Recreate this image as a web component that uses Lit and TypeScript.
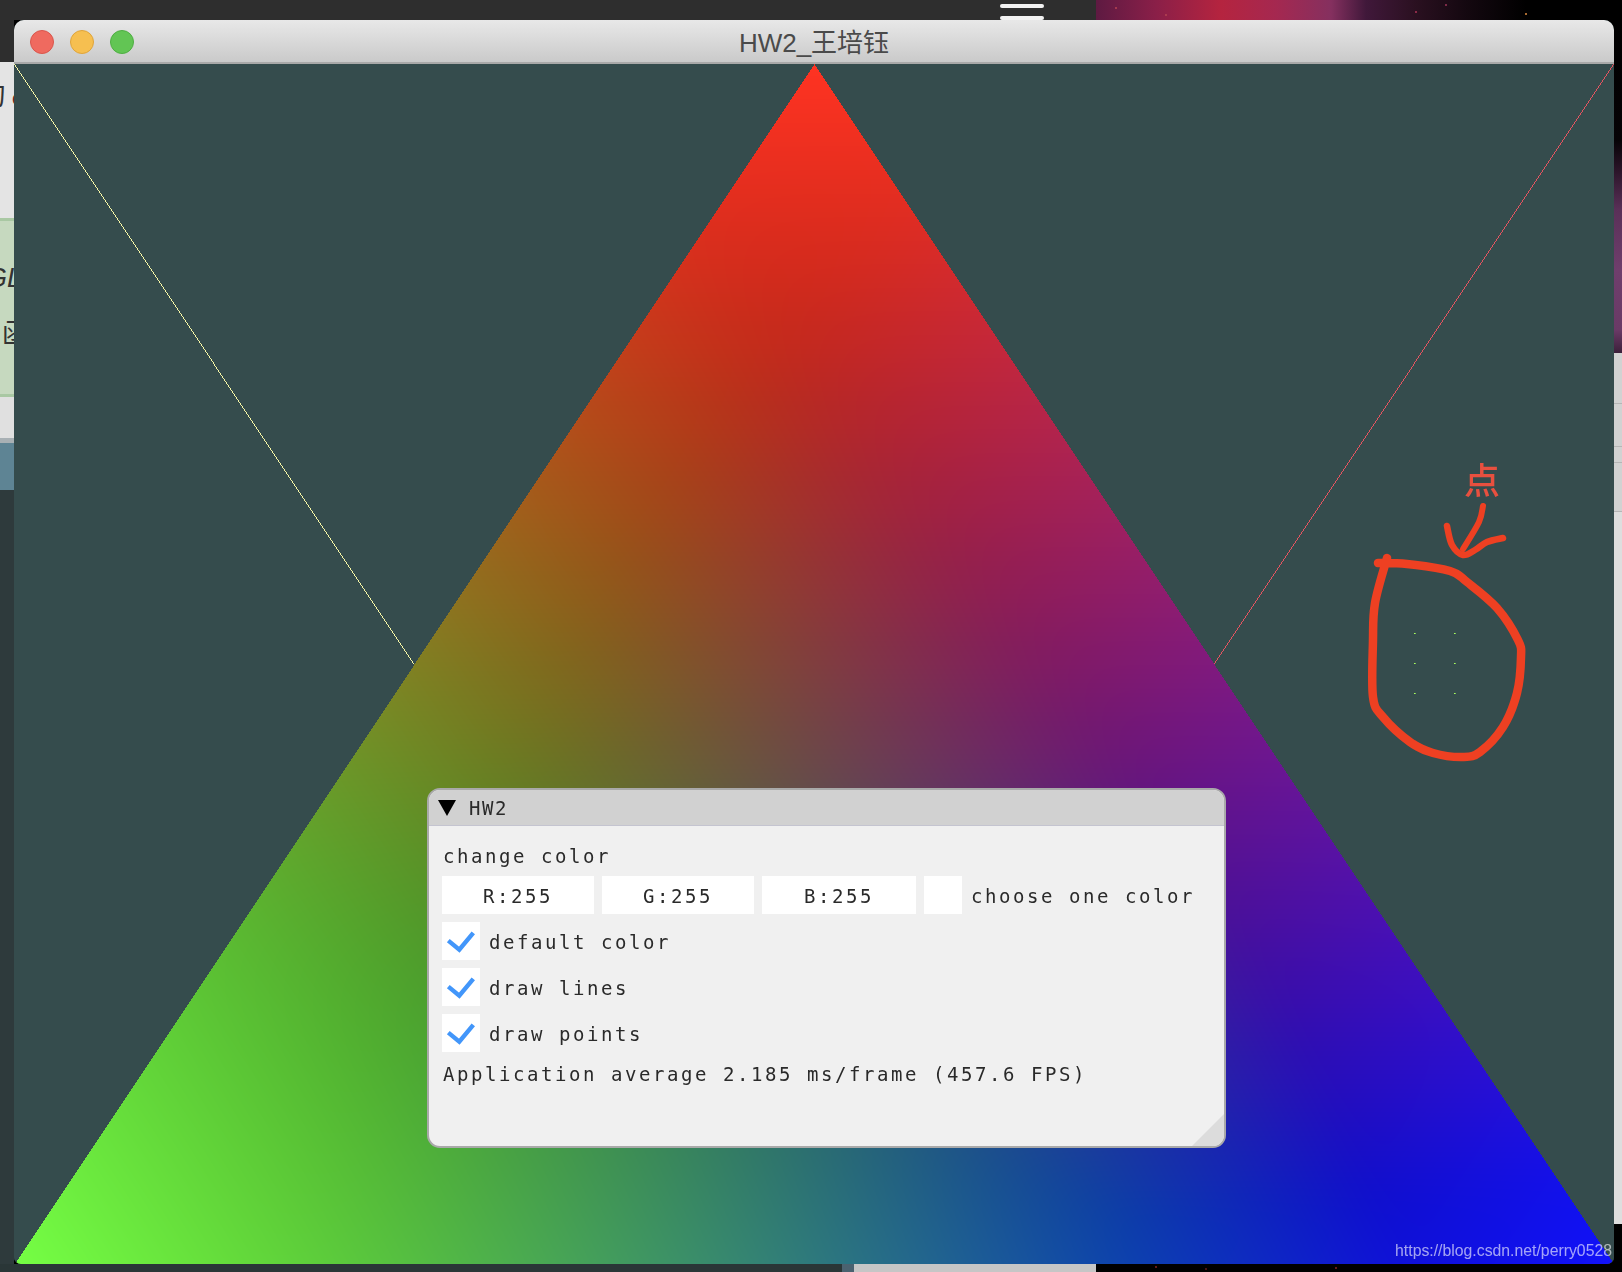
import { LitElement, html, css, svg } from "lit";
import { customElement } from "lit/decorators.js";

type Pt = [number, number];

function smooth(p: Pt[]): string {
  let d = `M${p[0][0]} ${p[0][1]}`;
  for (let i = 0; i < p.length - 1; i++) {
    const a = p[Math.max(0, i - 1)], b = p[i], c = p[i + 1], e = p[Math.min(p.length - 1, i + 2)];
    const c1 = [b[0] + (c[0] - a[0]) / 6, b[1] + (c[1] - a[1]) / 6];
    const c2 = [c[0] - (e[0] - b[0]) / 6, c[1] - (e[1] - b[1]) / 6];
    d += `C${c1[0].toFixed(1)} ${c1[1].toFixed(1)} ${c2[0].toFixed(1)} ${c2[1].toFixed(1)} ${c[0]} ${c[1]}`;
  }
  return d;
}

const LOOP: Pt[] = [[1378, 563], [1407, 564], [1450, 571], [1467, 582], [1497, 608], [1518, 640], [1521, 657], [1517, 693], [1503, 727], [1480, 752], [1463, 757], [1433, 753], [1410, 742], [1383, 717], [1373, 697], [1373, 640], [1375, 603], [1387, 558]];
const ARROW_A: Pt[] = [[1483, 506], [1479, 522], [1463, 549]];
const ARROW_B: Pt[] = [[1447, 526], [1452, 545], [1463, 555], [1475, 550], [1487, 542], [1503, 538]];

@customElement("app-root")
export class AppRoot extends LitElement {
  static styles = css`
    :host { display: block; width: 1622px; height: 1272px; overflow: hidden; background: #000; }
    .desk { display: grid; grid-template-columns: 14px 1600px 8px; grid-template-rows: 20px 1244px 8px; width: 1622px; height: 1272px; }
    .top { grid-column: 1 / 4; display: flex; overflow: hidden; }
    .top-dark { width: 1096px; background: #2e2e2e; display: flex; justify-content: flex-end; padding-right: 52px; box-sizing: border-box; }
    .burger { width: 44px; padding-top: 4px; display: flex; flex-direction: column; gap: 8px; }
    .burger i { display: block; height: 4px; border-radius: 2px; background: #f2f2f2; flex: none; }
    .nebula { flex: 1; background:
      radial-gradient(circle at 430px 14px, #a86a30 0 1px, transparent 1.5px),
      radial-gradient(circle at 20px 8px, #b04050 0 .6px, transparent 1.2px),
      radial-gradient(circle at 70px 15px, #b04050 0 .6px, transparent 1.2px),
      radial-gradient(circle at 320px 12px, #a03050 0 .6px, transparent 1.2px),
      radial-gradient(circle at 350px 5px, #903050 0 .6px, transparent 1.2px),
      linear-gradient(90deg, #5e1a42 0, #8a1f48 60px, #b5243f 125px, #a52850 180px, #85305f 235px, #40183a 270px, #2a1020 320px, #140810 370px, #000 430px); }

    .left { display: flex; flex-direction: column; overflow: hidden; font-family: "Noto Sans CJK SC", "Liberation Sans", sans-serif; font-size: 27px; color: #333; }
    .l-dark { height: 42px; background: #2e2e2e; flex: none; }
    .l-page { height: 156px; flex: none; background: #e4e4e4; white-space: nowrap; padding-top: 14px; box-sizing: border-box; line-height: 36px; }
    .l-page b { font-weight: 400; margin-left: -21px; }
    .l-page em { font-style: normal; color: #7a1f1f; margin-left: 6px; font-size: 20px; font-family: "Liberation Sans", sans-serif; }
    .l-green { height: 179px; flex: none; box-sizing: border-box; background: #c6d9bf; border-top: 3px solid #a9c8a3; border-bottom: 3px solid #a9c8a3; white-space: nowrap; padding-top: 40px; line-height: 34px; }
    .l-green .gl { display: block; font-family: "Liberation Sans", sans-serif; font-style: italic; margin-left: -14px; }
    .l-green .fn { display: block; margin-left: 2px; margin-top: 20px; }
    .l-page2 { height: 41px; flex: none; background: #e0e0e0; }
    .l-line { height: 5px; flex: none; background: #a8b0b4; }
    .l-blue { height: 47px; flex: none; background: #5e8494; }
    .l-rest { flex: 1; background: #2e3a3c; }

    .win { position: relative; z-index: 1; display: flex; flex-direction: column; border-radius: 10px 10px 7px 7px; overflow: hidden; background: #354c4d; }
    .title { height: 44px; flex: none; box-sizing: border-box; display: flex; align-items: center; position: relative; justify-content: center; padding-bottom: 2px;
      background: linear-gradient(180deg, #e8e8e8, #cacaca); border-bottom: 2px solid #a9a9a9; color: #4a4a4a;
      font: 26px "Liberation Sans", "Noto Sans CJK SC", sans-serif; }
    .lights { position: absolute; left: 16px; top: 10px; display: flex; gap: 16px; }
    .lights i { display: block; width: 24px; height: 24px; border-radius: 50%; box-sizing: border-box; border: 1px solid; }
    .lights .r { background: #ef6a5f; border-color: #d9564c; }
    .lights .y { background: #f6bf50; border-color: #dfa43b; }
    .lights .g { background: #62c554; border-color: #4fae43; }

    .stage { position: relative; height: 1200px; flex: none; }
    canvas { display: block; }
    .marks { position: absolute; left: 0; top: 0; pointer-events: none; }
    .marks text { font: 500 36px "Noto Sans CJK SC", sans-serif; fill: #e8503f; }
    .mark-line { fill: none; stroke: #ee4022; stroke-linecap: round; stroke-linejoin: round; }
    .wm { position: absolute; right: 2px; bottom: 4px; font: 15.8px "Liberation Sans", sans-serif; color: rgba(255,255,255,.62); white-space: nowrap; }

    .panel { position: absolute; left: 413px; top: 724px; width: 799px; height: 360px; box-sizing: border-box; border: 2px solid #a9a9a9; border-radius: 13px; background: #f0f0f0; overflow: hidden;
      font: 19px "DejaVu Sans Mono", monospace; letter-spacing: 2.56px; color: #2a2a2a; }
    .head { height: 36px; box-sizing: border-box; background: #d1d1d1; border-bottom: 1px solid #c4c4d0; display: flex; align-items: center; padding-left: 9px; gap: 13px; letter-spacing: 1.5px; }
    .head svg { flex: none; }
    .body { display: flex; flex-direction: column; gap: 8px; padding: 14px 13px 0; }
    .line { height: 28px; line-height: 28px; white-space: pre; padding-left: 1px; }
    .line.first { line-height: 32px; }
    .line.app { line-height: 29px; }
    .row { display: flex; align-items: center; height: 38px; gap: 8px; white-space: pre; }
    .field { height: 38px; width: 152px; background: #fff; display: flex; align-items: center; justify-content: center; padding-top: 2px; box-sizing: border-box; }
    .field.wide { width: 154px; }
    .swatch { width: 38px; height: 38px; background: #fff; flex: none; }
    .swatch + span { margin-left: 1px; padding-top: 2px; }
    .check { width: 38px; height: 38px; background: #fff; flex: none; }
    .check svg { display: block; }
    .check + span { margin-left: 1px; padding-top: 2px; }
    .grip { position: absolute; right: 0; bottom: 0; width: 32px; height: 32px; background: #dcdcdc; clip-path: polygon(100% 0, 100% 100%, 0 100%); }

    .right { display: flex; flex-direction: column; overflow: hidden; }
    .r-neb { height: 333px; flex: none; background: linear-gradient(180deg, #000 0, #060306 120px, #2a1428 150px, #5a3058 190px, #6f3e6c 250px, #6a3a66 310px, #3c1f3a 333px); }
    .r-g { flex: none; box-sizing: border-box; background: #d2d2d2; border-bottom: 1px solid #b6b6b6; }
    .r-a { height: 51px; } .r-b { height: 43px; } .r-c { height: 16px; } .r-d { height: 49px; }
    .r-rest { flex: 1; background: #dedede; }
    .r-end { height: 40px; flex: none; background: #000; }

    .bottom { grid-column: 1 / 4; display: flex; }
    .b-dark { width: 842px; background: #2a3637; }
    .b-blue { width: 12px; background: #4a6270; }
    .b-grey { width: 242px; background: #c6c6c6; }
    .b-black { flex: 1; background:
      radial-gradient(circle at 60px 3px, #7a2020 0 .6px, transparent 1.2px),
      radial-gradient(circle at 110px 5px, #5a1818 0 .6px, transparent 1.2px),
      radial-gradient(circle at 240px 4px, #7a2020 0 .6px, transparent 1.2px),
      #000; }
  `;

  firstUpdated() {
    const cv = this.renderRoot.querySelector("canvas") as HTMLCanvasElement;
    const W = cv.width, H = cv.height;
    const ctx = cv.getContext("2d")!;
    const img = ctx.createImageData(W, H);
    const d = img.data;
    for (let i = 0; i < d.length; i += 4) { d[i] = 53; d[i + 1] = 76; d[i + 2] = 77; d[i + 3] = 255; }
    const put = (x: number, y: number, r: number, g: number, b: number) => {
      const i = (Math.round(y) * W + Math.round(x)) * 4;
      d[i] = r; d[i + 1] = g; d[i + 2] = b;
    };
    for (let y = 0; y < 602; y++) {
      const dx = y * (800 / 1201);
      put(dx, y, 245, 245, 165);
      put(W - 1 - dx, y, 226, 84, 96);
    }
    for (const px of [1400, 1440]) for (const py of [569, 599, 629]) {
      put(px, py, 170, 255, 90);
      put(px + 1, py, 130, 200, 90);
    }

    const P = 5, Q = 1 / P;
    const pw = (v: number) => { const s = v * v; return s * s * v; };
    const TH = 1201;
    for (let y = 0; y < H; y++) {
      const t = (y + 0.5) / TH;
      const half = 800 * t;
      const x0 = Math.max(0, Math.ceil(800 - half));
      const x1 = Math.min(W - 1, Math.floor(800 + half));
      for (let x = x0; x <= x1; x++) {
        const s = Math.min(1, Math.max(0, (x + 0.5 - (800 - half)) / (2 * half)));
        const r = 1 - t, g = t * (1 - s), b = t * s;
        const gr = Math.max(0, 0.46 * g - 0.2 * b * b);
        const gg = Math.max(0, g - 0.1 * b * b);
        const or = Math.pow(pw(r) + pw(gr) + pw(0.07 * b), Q);
        const og = Math.pow(pw(0.2 * r) + pw(gg) + pw(0.07 * b), Q);
        const ob = Math.pow(pw(0.133 * r) + pw(0.267 * g) + pw(0.98 * b), Q);
        const i = (y * W + x) * 4;
        d[i] = or * 255;
        d[i + 1] = og * 255;
        d[i + 2] = ob * 255;
      }
    }
    ctx.putImageData(img, 0, 0);
  }

  private check() {
    return html`<div class="check"><svg width="38" height="38" viewBox="0 0 38 38"><path d="M6.3 18.6 L17.3 27.6 L31.3 10.8" fill="none" stroke="#4296fa" stroke-width="4.4"/></svg></div>`;
  }

  render() {
    return html`
      <div class="desk">
        <div class="top">
          <div class="top-dark"><div class="burger"><i></i><i></i></div></div>
          <div class="nebula"></div>
        </div>
        <div class="left">
          <div class="l-dark"></div>
          <div class="l-page"><b>句</b><em>c</em></div>
          <div class="l-green"><span class="gl">GL</span><span class="fn">函数</span></div>
          <div class="l-page2"></div>
          <div class="l-line"></div>
          <div class="l-blue"></div>
          <div class="l-rest"></div>
        </div>
        <div class="win">
          <div class="title">
            <div class="lights"><i class="r"></i><i class="y"></i><i class="g"></i></div>
            <span>HW2_王培钰</span>
          </div>
          <div class="stage">
            <canvas width="1600" height="1200"></canvas>
            <svg class="marks" width="1600" height="1200" viewBox="14 64 1600 1200">
              ${svg`<text x="1464" y="494">点</text>`}
              <path class="mark-line" stroke-width="8.5" d=${smooth(LOOP)}></path>
              <path class="mark-line" stroke-width="6" d=${smooth(ARROW_A)}></path>
              <path class="mark-line" stroke-width="6.5" d=${smooth(ARROW_B)}></path>
            </svg>
            <div class="panel">
              <div class="head">
                <svg width="18" height="16" viewBox="0 0 18 16"><path d="M0 0H18L9 16Z" fill="#000"/></svg>
                <span>HW2</span>
              </div>
              <div class="body">
                <div class="line first">change color</div>
                <div class="row">
                  <div class="field">R:255</div>
                  <div class="field">G:255</div>
                  <div class="field wide">B:255</div>
                  <div class="swatch"></div>
                  <span>choose one color</span>
                </div>
                <div class="row">${this.check()}<span>default color</span></div>
                <div class="row">${this.check()}<span>draw lines</span></div>
                <div class="row">${this.check()}<span>draw points</span></div>
                <div class="line app">Application average 2.185 ms/frame (457.6 FPS)</div>
              </div>
              <div class="grip"></div>
            </div>
            <div class="wm">https://blog.csdn.net/perry0528</div>
          </div>
        </div>
        <div class="right">
          <div class="r-neb"></div>
          <div class="r-g r-a"></div>
          <div class="r-g r-b"></div>
          <div class="r-g r-c"></div>
          <div class="r-g r-d"></div>
          <div class="r-rest"></div>
          <div class="r-end"></div>
        </div>
        <div class="bottom">
          <div class="b-dark"></div>
          <div class="b-blue"></div>
          <div class="b-grey"></div>
          <div class="b-black"></div>
        </div>
      </div>
    `;
  }
}
